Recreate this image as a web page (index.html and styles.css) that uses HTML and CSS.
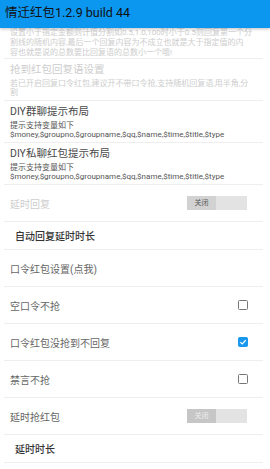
FILE: index.html
```html
<!DOCTYPE html>
<html lang="zh-CN">
<head>
  <meta charset="UTF-8">
  <meta name="viewport" content="width=device-width, initial-scale=1.0">
  <title>情迁红包</title>
  <link rel="stylesheet" href="styles.css">
</head>
<body>
  <div class="app">
    <div class="toolbar">情迁红包1.2.9 build 44</div>
    <div class="scroller">
      <ul class="prefs">
        <li class="pref pref-top disabled">
          <p class="pref-title">设置回复语分割金额</p>
          <p class="pref-sum">设置小于指定金额则计值分割如0.5,1.0,100时小于0.5则回复第一个分<br>割线的随机内容,最后一个回复内容为不成立也就是大于指定值的内<br>容也就是说的总数要比回复语的总数小一个哦!</p>
        </li>
        <li class="pref disabled">
          <p class="pref-title">抢到红包回复语设置</p>
          <p class="pref-sum">若已开启回复口令红包,建议开不带口令抢,支持随机回复语,用半角,分<br>割</p>
        </li>
        <li class="pref">
          <p class="pref-title">DIY群聊提示布局</p>
          <p class="pref-sum">提示支持变量如下<br>$money,$groupno,$groupname,$qq,$name,$time,$title,$type</p>
        </li>
        <li class="pref">
          <p class="pref-title">DIY私聊红包提示布局</p>
          <p class="pref-sum">提示支持变量如下<br>$money,$groupno,$groupname,$qq,$name,$time,$title,$type</p>
        </li>
        <li class="row disabled">
          <span class="row-label">延时回复</span>
          <span class="switch"><span class="switch-thumb">关闭</span></span>
        </li>
        <li class="row row-head">
          <span class="row-label">自动回复延时时长</span>
        </li>
        <li class="row">
          <span class="row-label">口令红包设置(点我)</span>
        </li>
        <li class="row">
          <span class="row-label">空口令不抢</span>
          <span class="check"></span>
        </li>
        <li class="row">
          <span class="row-label">口令红包没抢到不回复</span>
          <span class="check checked">
            <svg viewBox="0 0 10 10" width="8" height="8"><path d="M1.6 5.2 L4 7.4 L8.4 2.8" fill="none" stroke="#fff" stroke-width="1.5"/></svg>
          </span>
        </li>
        <li class="row">
          <span class="row-label">禁言不抢</span>
          <span class="check"></span>
        </li>
        <li class="row">
          <span class="row-label">延时抢红包</span>
          <span class="switch switch-dim"><span class="switch-thumb">关闭</span></span>
        </li>
        <li class="row row-head">
          <span class="row-label">延时时长</span>
        </li>
      </ul>
    </div>
  </div>
</body>
</html>
```

FILE: styles.css
```css
html,body,div,ul,li,p{margin:0;padding:0;}
li{
  list-style: none;
}
html,body{
  height: 100%;
}
body{
  background: #fff;
  color: #555;
  font-family: Roboto, "Noto Sans CJK SC", sans-serif;
  overflow: hidden;
}
.app{
  display: flex;
  flex-direction: column;
  height: 100%;
}
.toolbar{
  position: relative;
  z-index: 2;
  flex: none;
  height: 28px;
  line-height: 25px;
  padding-left: 5px;
  background: #0b96f0;
  color: #111;
  font-size: 12.5px;
  box-shadow: 0 1px 3px rgba(0,0,0,.25);
}
.scroller{
  flex: 1;
  overflow: hidden;
}
.prefs{
  margin: -20px 7px 0 4px;
}
.pref{
  padding: 5px 0 3px 6px;
  border-bottom: 1px solid #eee;
}
.pref-title{
  font-size: 10.5px;
  line-height: 12px;
  color: #4a4a4a;
}
.pref-sum{
  margin-top: 3px;
  font-size: 8px;
  line-height: 9px;
  color: #555;
  white-space: nowrap;
}
.pref-top{
  padding-bottom: 0;
}
.pref-top .pref-sum{
  line-height: 10px;
}
.disabled .pref-title,
.disabled .pref-sum,
.disabled .row-label{
  color: #cdcdcd;
}
.row{
  display: flex;
  align-items: center;
  justify-content: space-between;
  height: 36px;
  padding: 0 15px 0 6px;
  border-bottom: 1px solid #eee;
}
.row-label{
  font-size: 10px;
  color: #666;
}
.row-head{
  height: 27px;
  padding-left: 11px;
}
.row-head .row-label{
  color: #333;
  font-weight: 500;
}
.switch{
  display: flex;
  width: 60px;
  height: 14px;
  background: #e3e3e3;
  margin-right: 1px;
}
.switch-thumb{
  width: 29px;
  height: 14px;
  line-height: 14px;
  text-align: center;
  font-size: 7px;
  color: #555;
  background: #d2d2d2;
}
.switch-dim .switch-thumb{
  background: #c6c6c6;
  color: #eee;
}
.check{
  display: flex;
  align-items: center;
  justify-content: center;
  width: 10px;
  height: 10px;
  border: 1.5px solid #777;
  border-radius: 1.5px;
  box-sizing: border-box;
}
.check.checked{
  border-color: #1a98f0;
  background: #1a98f0;
}
```
